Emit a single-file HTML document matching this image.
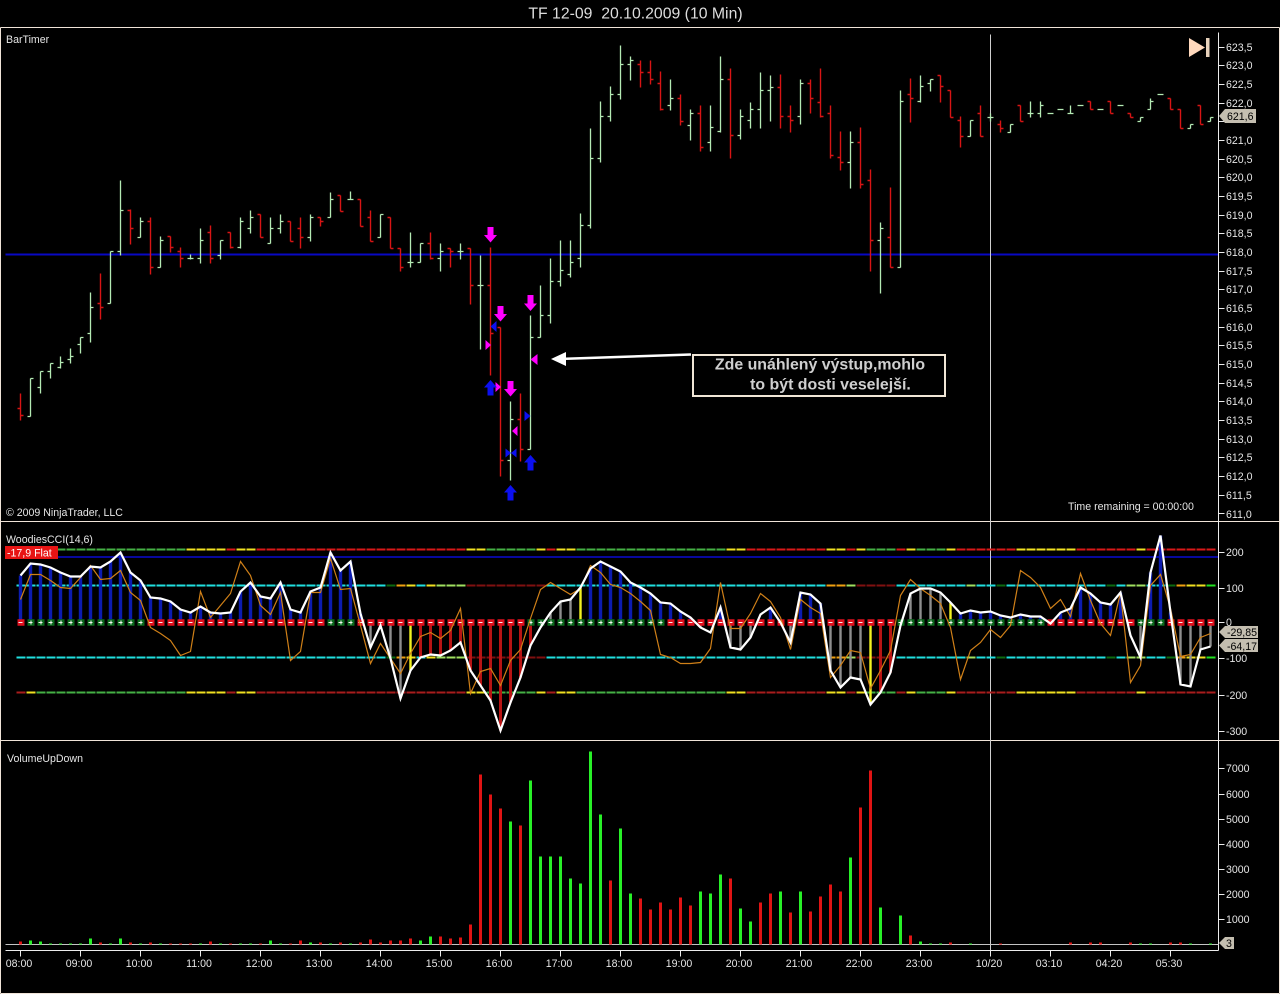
<!DOCTYPE html>
<html><head><meta charset="utf-8"><title>TF 12-09</title>
<style>html,body{margin:0;padding:0;background:#000;width:1280px;height:994px;overflow:hidden}svg{display:block}text{font-family:"Liberation Sans",Arial,sans-serif;font-size:10.6px;fill:#e6e6e6}</style></head><body>
<svg width="1280" height="994" viewBox="0 0 1280 994" xmlns="http://www.w3.org/2000/svg">
<rect width="1280" height="994" fill="#000"/>
<text x="635.5" y="18.500" text-anchor="middle" style="font-size:15.800px;fill:#ddd">TF 12-09&#160;&#160;20.10.2009 (10 Min)</text>
<g stroke="#f0e4d8" fill="none" transform="translate(.5 .5)">
<path d="M0 27H1279M0 521H1279M0 740H1279M0 993H1279M0 27V993M1279 27V993"/>
</g>
<!-- blue lines -->
<g fill="none" transform="translate(.5 .5)">
<path d="M5 254H1218" stroke="#0808c4" stroke-width="2"/>
<path d="M16 556.500H1218" stroke="#08089c" stroke-width="2"/>
<path d="M990 34V950" stroke="#cfcfcf"/>
<!-- price bars -->
<g stroke-width="1.300" stroke="#b4eab4">
<path d="M30 378V416M27 416H30M30 378H33M40 371V393M37 387H40M40 371H43M50 363V378M47 371H50M50 363H53M60 356V368M57 367H60M60 362H63M70 348V363M67 359H70M70 356H73M80 337V353M77 344H80M80 337H83M90 292V342M87 333H90M90 307H93M110 251V303M107 303H110M110 251H113M120 180V255M117 251H120M120 210H123M140 217V237M137 237H140M140 221H143M160 236V267M157 267H160M160 240H163M190 254V259M187 258H193M200 228V263M197 258H200M200 240H203M220 240V259M217 255H220M220 240H223M240 217V248M237 247H240M240 221H243M250 210V233M247 228H250M250 217H253M270 217V243M267 243H270M270 228H273M280 214V233M277 228H280M280 221H283M310 214V241M307 237H310M310 217H313M330 192V217M327 217H330M330 199H333M350 191V199M347 199H353M380 214V237M377 237H380M380 214H383M410 232V267M407 262H413M420 243V262M417 262H420M420 243H423M440 243V271M437 258H440M440 251H443M460 243V259M457 251H463M480 255V349M477 285H483M510 401V480M507 460H510M510 419H513M530 315V449M527 449H530M530 337H533M540 285V337M537 337H540M540 315H543M550 258V323M547 315H550M550 281H553M560 240V286M557 281H560M560 270H563M570 240V277M567 274H570M570 262H573M580 213V267M577 258H580M580 225H583M590 128V228M587 225H590M590 158H593M600 101V162M597 158H600M600 116H603M610 86V121M607 116H610M610 94H613M620 45V99M617 94H620M620 64H623M630 56V80M627 64H630M630 60H633M670 79V110M667 105H670M670 98H673M690 109V140M687 125H690M690 113H693M710 105V151M707 142H710M710 127H713M720 56V132M717 131H720M720 79H723M740 109V139M737 135H740M740 116H743M750 102V128M747 120H750M750 109H753M760 72V128M757 109H760M760 90H763M770 75V121M767 90H770M770 87H773M800 79V124M797 116H800M800 83H803M850 131V188M847 162H850M850 142H853M880 222V293M877 240H880M880 228H883M900 90V267M897 267H900M900 101H903M920 75V102M917 101H920M920 86H923M930 79V91M927 83H930M930 79H933M970 120V136M967 136H970M970 120H973M990 113V121M987 117H993M1010 124V132M1007 132H1010M1010 124H1013M1030 101V117M1027 113H1033M1040 101V117M1037 113H1040M1040 105H1043M1047 113H1053M1057 109H1063M1070 105V113M1067 113H1073M1077 105H1083M1097 109H1103M1117 105H1123M1140 117V121M1137 121H1140M1140 117H1143M1150 98V109M1147 109H1150M1150 101H1153M1157 94H1163M1190 124V128M1187 128H1190M1190 124H1193M1210 117V121M1207 121H1210M1210 117H1213"/>
</g>
<g stroke-width="1.400" stroke="#d81414">
<path d="M20 393V420M17 408H20M20 415H23M100 273V319M97 303H100M100 307H103M130 209V244M127 210H130M130 228H133M150 217V274M147 221H150M150 267H153M170 236V252M167 236H170M170 247H173M180 247V267M177 251H180M180 258H183M210 225V263M207 232H210M210 258H213M230 232V248M227 232H230M230 247H233M260 214V237M257 214H260M260 237H263M290 221V241M287 221H290M290 241H293M300 217V248M297 228H300M300 237H303M320 217V226M317 217H320M320 221H323M340 195V211M337 195H340M340 211H343M360 199V226M357 199H360M360 226H363M370 210V241M367 217H370M370 241H373M390 217V248M387 217H390M390 248H393M400 248V271M397 248H400M400 267H403M430 232V259M427 243H430M430 258H433M450 248V267M447 248H450M450 251H453M470 248V304M467 248H470M470 285H473M490 247V375M487 285H490M490 333H493M500 327V476M497 327H500M500 460H503M520 393V461M517 419H520M520 449H523M640 60V87M637 64H640M640 72H643M650 60V84M647 72H650M650 79H653M660 71V110M657 83H660M660 109H663M680 94V125M677 98H680M680 121H683M700 105V151M697 113H700M700 147H703M730 68V158M727 79H730M730 135H733M780 74V128M777 87H780M780 116H783M790 105V132M787 116H790M790 120H793M810 79V113M807 83H810M810 98H813M820 68V117M817 102H820M820 116H823M830 105V158M827 113H830M830 155H833M840 131V170M837 157H840M840 162H843M860 127V188M857 142H860M860 184H863M870 169V271M867 180H870M870 240H873M890 187V267M887 237H890M890 267H893M910 78V122M907 94H910M910 98H913M940 75V102M937 75H940M940 86H943M950 90V117M947 90H950M950 117H953M960 116V147M957 120H960M960 136H963M980 105V136M977 113H980M980 136H983M1000 120V132M997 124H1000M1000 128H1003M1020 105V121M1017 105H1020M1020 121H1023M1090 101V109M1087 101H1090M1090 109H1093M1110 101V113M1107 101H1110M1110 113H1113M1130 113V117M1127 113H1130M1130 117H1133M1170 98V109M1167 98H1170M1170 109H1173M1180 109V128M1177 109H1180M1180 128H1183M1200 105V124M1197 105H1200M1200 124H1203"/>
</g>
<!-- axes -->
<path d="M1218 32V950M5 950H1218M1218 47H1224M1218 65H1224M1218 84H1224M1218 103H1224M1218 121H1224M1218 140H1224M1218 159H1224M1218 177H1224M1218 196H1224M1218 215H1224M1218 233H1224M1218 252H1224M1218 271H1224M1218 289H1224M1218 308H1224M1218 327H1224M1218 345H1224M1218 364H1224M1218 383H1224M1218 401H1224M1218 420H1224M1218 439H1224M1218 457H1224M1218 476H1224M1218 495H1224M1218 513H1224M1218 552H1224M1218 588H1224M1218 622H1224M1218 658H1224M1218 695H1224M1218 731H1224M1218 768H1224M1218 794H1224M1218 819H1224M1218 844H1224M1218 869H1224M1218 894H1224M1218 919H1224M20 950V956M80 950V956M140 950V956M200 950V956M260 950V956M320 950V956M380 950V956M440 950V956M500 950V956M560 950V956M620 950V956M680 950V956M740 950V956M800 950V956M860 950V956M920 950V956M990 950V956M1050 950V956M1110 950V956M1170 950V956" stroke="#ececec"/>
<!-- CCI level lines -->
<g stroke-width="2" stroke-dasharray="9 1">
<path stroke="#d81818" d="M226 549H235M256 549H465M546 549H555M746 549H825M846 549H855M896 549H905M956 549H1015M1076 549H1135M1146 549H1215"/>
<path stroke="#f0e020" d="M186 549H225M236 549H255M466 549H485M536 549H545M556 549H575M726 549H745M826 549H845M856 549H865M906 549H915M946 549H955M1016 549H1075M1136 549H1145M26 692H35M186 692H225M236 692H255M466 692H485M536 692H545M556 692H575M726 692H745M826 692H845M856 692H865M906 692H915M946 692H955M1016 692H1075M1136 692H1145"/>
<path stroke="#44b044" d="M36 549H185M486 549H535M576 549H725M866 549H895M916 549H945M36 692H185M486 692H535M576 692H725M866 692H895M916 692H945"/>
<path stroke="#a81c1c" d="M16 692H25M226 692H235M256 692H465M546 692H555M746 692H825M846 692H855M896 692H905M956 692H1015M1076 692H1135M1146 692H1215"/>
<path stroke="#20e0e0" d="M16 585H385M416 585H425M546 585H825M896 585H965M976 585H995M1006 585H1105M1116 585H1125M1146 585H1165M16 657H385M416 657H425M546 657H825M896 657H965M976 657H995M1006 657H1105M1116 657H1125M1146 657H1165"/>
<path stroke="#0c6a10" d="M386 585H395M996 585H1005M1106 585H1115M1166 585H1175M386 657H395M996 657H1005M1106 657H1115M1166 657H1175"/>
<path stroke="#f0a010" d="M396 585H405M826 585H845M1176 585H1185M396 657H405M826 657H845M1176 657H1185"/>
<path stroke="#f0e020" d="M406 585H415M426 585H435M1186 585H1205M406 657H415M426 657H435M1186 657H1205"/>
<path stroke="#a0e060" d="M436 585H465M846 585H855M966 585H975M1126 585H1145M436 657H465M846 657H855M966 657H975M1126 657H1145"/>
<path stroke="#801010" d="M466 585H545M856 585H895M466 657H545M856 657H895"/>
<path stroke="#20e020" d="M1206 585H1215M1206 657H1215"/>
</g>
<!-- histogram -->
<g stroke-width="3" fill="none">
<path stroke="#0c1cb0" stroke-width="3.400" d="M20 622V575M30 622V563M40 622V564M50 622V567M60 622V572M70 622V576M80 622V576M90 622V566M100 622V567M110 622V561M120 622V552M130 622V572M140 622V580M150 622V597M160 622V598M170 622V601M180 622V609M190 622V612M200 622V606M210 622V612M220 622V613M230 622V612M240 622V591M250 622V582M260 622V596M270 622V598M280 622V582M290 622V609M300 622V612M310 622V591M320 622V587M330 622V552M340 622V570M350 622V561M360 622V613M590 622V568M600 622V561M610 622V566M620 622V571M630 622V582M640 622V587M650 622V593M660 622V602M670 622V603M680 622V611M690 622V617M720 622V607M770 622V607M800 622V592M810 622V594M820 622V603M960 622V613M970 622V610M980 622V612M990 622V611M1000 622V615M1010 622V617M1020 622V614M1030 622V616M1040 622V616M1060 622V612M1070 622V608M1080 622V587M1090 622V593M1100 622V602M1110 622V604M1120 622V592M1150 622V572M1160 622V535M1170 622V612"/>
<path stroke="#8e8e8e" stroke-width="2.400" d="M370 622V647M390 622V658M400 622V698M550 622V612M560 622V601M570 622V599M700 622V627M730 622V647M740 622V649M750 622V637M790 622V642M830 622V670M840 622V687M850 622V677M860 622V679M910 622V593M920 622V588M930 622V588M940 622V592M1140 622V657M1180 622V684M1190 622V686M1200 622V649M1210 622V646"/>
<path stroke="#f2f220" stroke-width="2.400" d="M410 622V670M580 622V587M870 622V704M950 622V602"/>
<path stroke="#b81414" d="M420 622V657M430 622V654M440 622V655M450 622V650M460 622V642M470 622V670M480 622V685M490 622V700M500 622V730M510 622V702M520 622V677M530 622V645M880 622V692M890 622V672"/>
</g>
<!-- zero squares -->
<g stroke-width="6.500" stroke-dasharray="7 3">
<path stroke="#e0101e" d="M17 622H24M147 622H324M357 622H524M667 622H894M1047 622H1134M1167 622H1214"/>
<path stroke="#0a6a1c" d="M27 622H144M327 622H354M527 622H664M897 622H1044M1137 622H1164"/>
</g>
<path stroke="#f4f4f4" stroke-dasharray="4 6" d="M18 622H22M148 622H322M358 622H522M668 622H892M1048 622H1132M1168 622H1212M28 622H142M328 622H352M528 622H662M898 622H1042M1138 622H1162"/>
<path stroke="#f4f4f4" stroke-width="4" stroke-dasharray="1 9" d="M30 622H141M330 622H351M530 622H661M900 622H1041M1140 622H1161"/>
<!-- CCI orange -->
<polyline fill="none" stroke="#d08018" stroke-width="1.200" points="20,599 30,574 40,574 50,580 60,587 70,588 80,577 90,565 100,579 110,578 120,570 130,592 140,600 150,627 160,633 170,640 180,655 190,651 200,591 210,617 220,605 230,593 240,561 250,575 260,605 270,614 280,592 290,660 300,651 310,592 320,592 330,558 340,589 350,588 360,625 370,663 380,643 390,658 400,673 410,653 420,636 430,632 440,638 450,630 460,608 470,693 480,671 490,668 500,685 510,660 520,649 530,618 540,589 550,582 560,588 570,594 580,588 590,565 600,572 610,584 620,587 630,593 640,601 650,610 660,654 670,657 680,663 690,663 700,662 710,648 720,582 730,628 740,628 750,613 760,593 770,601 780,617 790,649 800,599 810,607 820,613 830,677 840,665 850,650 860,652 870,688 880,670 890,650 900,595 910,579 920,588 930,595 940,603 950,627 960,679 970,650 980,642 990,629 1000,637 1010,625 1020,570 1030,577 1040,587 1050,608 1060,599 1070,616 1080,573 1090,600 1100,623 1110,635 1120,592 1130,682 1140,665 1150,585 1160,574 1170,608 1180,656 1190,654 1200,637 1210,633"/>
<!-- CCI white -->
<polyline fill="none" stroke="#fff" stroke-width="2.200" stroke-linejoin="miter" points="20,575 30,563 40,564 50,567 60,572 70,576 80,576 90,566 100,567 110,561 120,552 130,572 140,580 150,597 160,598 170,601 180,609 190,612 200,606 210,612 220,613 230,612 240,591 250,582 260,596 270,598 280,582 290,609 300,612 310,591 320,587 330,552 340,570 350,561 360,613 370,647 380,625 390,658 400,698 410,670 420,657 430,654 440,655 450,650 460,642 470,670 480,685 490,700 500,730 510,702 520,677 530,645 540,627 550,612 560,601 570,599 580,587 590,568 600,561 610,566 620,571 630,582 640,587 650,593 660,602 670,603 680,611 690,617 700,627 710,632 720,607 730,647 740,649 750,637 760,614 770,607 780,622 790,642 800,592 810,594 820,603 830,670 840,687 850,677 860,679 870,704 880,692 890,672 900,625 910,593 920,588 930,588 940,592 950,602 960,613 970,610 980,612 990,611 1000,615 1010,617 1020,614 1030,616 1040,616 1050,623 1060,612 1070,608 1080,587 1090,593 1100,602 1110,604 1120,592 1130,635 1140,657 1150,572 1160,535 1170,612 1180,684 1190,686 1200,649 1210,646"/>
<!-- volume -->
<path d="M5 944H1218" stroke="#c4c4c4"/>
<g stroke-width="3" fill="none">
<path stroke="#e01414" d="M20 944V941M100 944V942M130 944V942M150 944V942M170 944V943M180 944V943M190 944V943M210 944V941M230 944V943M260 944V943M290 944V943M300 944V940M320 944V942M340 944V942M360 944V942M370 944V939M380 944V942M390 944V940M400 944V940M410 944V938M440 944V936M450 944V938M460 944V937M470 944V924M480 944V774M490 944V794M500 944V808M520 944V825M610 944V880M640 944V898M650 944V909M660 944V902M670 944V909M680 944V897M690 944V905M730 944V878M760 944V902M770 944V893M790 944V912M810 944V911M820 944V896M830 944V884M840 944V891M860 944V807M870 944V770M910 944V935M950 944V942M1000 944V943M1070 944V942M1090 944V942M1100 944V942M1130 944V942M1170 944V942M1180 944V942"/>
<path stroke="#28f028" d="M30 944V940M40 944V941M50 944V943M60 944V943M70 944V943M80 944V943M90 944V938M110 944V943M120 944V938M140 944V943M160 944V943M200 944V943M220 944V943M240 944V943M250 944V943M270 944V940M280 944V943M310 944V942M330 944V943M350 944V943M420 944V940M430 944V936M510 944V821M530 944V780M540 944V856M550 944V856M560 944V856M570 944V878M580 944V883M590 944V751M600 944V814M620 944V828M630 944V893M700 944V891M710 944V893M720 944V874M740 944V908M750 944V921M780 944V891M800 944V891M850 944V857M880 944V907M900 944V915M920 944V941M930 944V943M940 944V943M970 944V943M1140 944V943M1150 944V943M1190 944V943M1210 944V943"/>
</g>
</g>
<!-- signals -->
<g fill="#f0f">
<path d="M487.500 227h6v8h3.500l-6.500 7.500-6.500-7.500h3.500zM497.500 306h6v8h3.500l-6.500 7.500-6.500-7.500h3.500zM507.500 381h6v8h3.500l-6.500 7.500-6.500-7.500h3.500zM527.500 295h6v8.500h3.500l-6.500 7.500-6.500-7.500h3.500z"/>
<path d="M485.500 340l5.500 5-5.500 5zM495.500 382l5.500 5-5.500 5zM517.500 426l-5.500 5 5.500 5zM537.500 354l-7 5.500 7 5.500z"/>
</g>
<g fill="#0c10f0">
<path d="M487.500 395.500h6v-8h3.500l-6.500-7.500-6.500 7.500h3.500zM507.500 500.500h6v-8h3.500l-6.500-7.500-6.500 7.500h3.500zM527.500 470.500h6v-8h3.500l-6.500-7.500-6.500 7.500h3.500z"/>
<path d="M496.500 321l-6 5.500 6 5.500zM505.500 448.500l5.500 4.500-5.500 4.500zM516.500 448.500l-5.500 4.500 5.500 4.500zM524.500 411l6 5-6 5z"/>
</g>
<!-- annotation -->
<path d="M691 354.500L566 358.800" stroke="#fff" stroke-width="2.500" fill="none"/>
<path d="M551 359L566 352V366Z" fill="#fff"/>
<rect x="693" y="355" width="252" height="41" fill="#000" stroke="#f0e6d6" stroke-width="2"/>
<text x="820" y="369.500" text-anchor="middle" style="font-size:15.900px;font-weight:bold;fill:#cfcfcf">Zde unáhlený výstup,mohlo</text>
<text x="830.500" y="389.500" text-anchor="middle" style="font-size:15.900px;font-weight:bold;fill:#cfcfcf">to být dosti veselejší.</text>
<!-- icon -->
<path d="M1189 38L1205 47.500L1189 57Z" fill="#ffd9bd"/>
<rect x="1206" y="38" width="3.500" height="19" fill="#e8d2bc"/>
<!-- labels -->
<text x="6" y="43">BarTimer</text>
<text x="6" y="516">© 2009 NinjaTrader, LLC</text>
<text x="1068" y="510">Time remaining = 00:00:00</text>
<text x="6" y="543">WoodiesCCI(14,6)</text>
<rect x="5" y="546" width="53" height="13" fill="#e81414"/>
<text x="7" y="556.500" style="fill:#fff">-17,9 Flat</text>
<text x="7" y="762">VolumeUpDown</text>
<g>
<text x="1226" y="51">623,5</text><text x="1226" y="69">623,0</text><text x="1226" y="88">622,5</text><text x="1226" y="107">622,0</text><text x="1226" y="144">621,0</text><text x="1226" y="163">620,5</text><text x="1226" y="181">620,0</text><text x="1226" y="200">619,5</text><text x="1226" y="219">619,0</text><text x="1226" y="237">618,5</text><text x="1226" y="256">618,0</text><text x="1226" y="275">617,5</text><text x="1226" y="293">617,0</text><text x="1226" y="312">616,5</text><text x="1226" y="331">616,0</text><text x="1226" y="349">615,5</text><text x="1226" y="368">615,0</text><text x="1226" y="387">614,5</text><text x="1226" y="405">614,0</text><text x="1226" y="424">613,5</text><text x="1226" y="443">613,0</text><text x="1226" y="461">612,5</text><text x="1226" y="480">612,0</text><text x="1226" y="499">611,5</text><text x="1226" y="518">611,0</text>
<text x="1226" y="556">200</text><text x="1226" y="592">100</text><text x="1226" y="626">0</text><text x="1226" y="662">-100</text><text x="1226" y="699">-200</text><text x="1226" y="735">-300</text>
<text x="1226" y="772">7000</text><text x="1226" y="798">6000</text><text x="1226" y="823">5000</text><text x="1226" y="848">4000</text><text x="1226" y="873">3000</text><text x="1226" y="898">2000</text><text x="1226" y="923">1000</text>
</g>
<g text-anchor="middle">
<text x="19" y="967">08:00</text><text x="79" y="967">09:00</text><text x="139" y="967">10:00</text><text x="199" y="967">11:00</text><text x="259" y="967">12:00</text><text x="319" y="967">13:00</text><text x="379" y="967">14:00</text><text x="439" y="967">15:00</text><text x="499" y="967">16:00</text><text x="559" y="967">17:00</text><text x="619" y="967">18:00</text><text x="679" y="967">19:00</text><text x="739" y="967">20:00</text><text x="799" y="967">21:00</text><text x="859" y="967">22:00</text><text x="919" y="967">23:00</text><text x="989" y="967">10/20</text><text x="1049" y="967">03:10</text><text x="1109" y="967">04:20</text><text x="1169" y="967">05:30</text>
</g>
<!-- tags -->
<path d="M1219 116L1225 109H1256V123H1225Z" fill="#c4beb0"/>
<text x="1227" y="120" style="fill:#000">621,6</text>
<path d="M1219 632L1225 626H1258V638H1225Z" fill="#c4beb0"/>
<text x="1227" y="636" style="fill:#000">-29,85</text>
<path d="M1219 645.500L1225 639H1258V652H1225Z" fill="#c4beb0"/>
<text x="1227" y="650" style="fill:#000">-64,17</text>
<path d="M1219 943L1225 937H1234V949H1225Z" fill="#c4beb0"/>
<text x="1226" y="947" style="fill:#000">3</text>
</svg>
</body></html>
